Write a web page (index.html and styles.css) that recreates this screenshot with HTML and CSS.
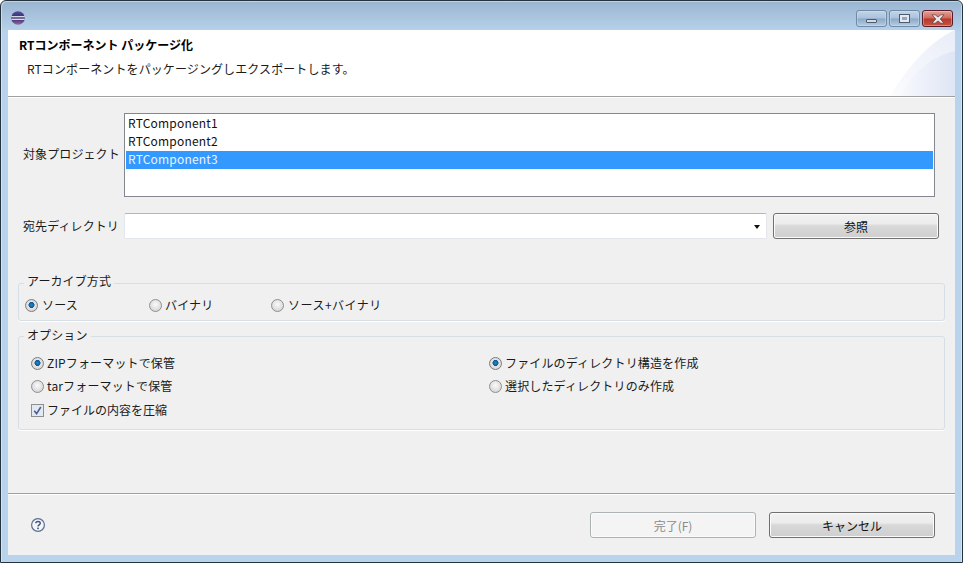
FILE: index.html
```html
<!DOCTYPE html>
<html lang="ja">
<head>
  <meta charset="utf-8">
  <title>RTコンポーネント パッケージ化</title>
  <link rel="stylesheet" href="styles.css">
</head>
<body>
  <div class="window">
    <!-- title bar -->
    <div class="titlebar">
      <svg class="app-icon" viewBox="0 0 16 16">
        <defs>
          <linearGradient id="sphere" x1="0" y1="0" x2="0" y2="1">
            <stop offset="0" stop-color="#5a4f9c"/>
            <stop offset=".5" stop-color="#2c2a6e"/>
            <stop offset="1" stop-color="#9a6a9e"/>
          </linearGradient>
          <linearGradient id="art-light" x1="0" y1="1" x2="1" y2="0">
            <stop offset="0" stop-color="#fbfcfe"/>
            <stop offset="1" stop-color="#e9edf8"/>
          </linearGradient>
          <linearGradient id="art-dark" x1="0" y1="0" x2="1" y2="0">
            <stop offset="0" stop-color="#f8f9fd"/>
            <stop offset="1" stop-color="#dfe5f5"/>
          </linearGradient>
        </defs>
        <circle cx="8" cy="8" r="6.8" fill="url(#sphere)"/>
        <rect x="1.4" y="6.2" width="13.2" height="1.1" fill="#fff"/>
        <rect x="1.4" y="8.7" width="13.2" height="1.1" fill="#fff"/>
      </svg>
      <div class="winbtns">
        <div class="winbtn"><span class="glyph-min"></span></div>
        <div class="winbtn"><span class="glyph-max"></span></div>
        <div class="winbtn winbtn-close">
          <svg viewBox="0 0 14 10"><path d="M1 0.8h3.2L7 3l2.8-2.2H13L9.2 5 13 9.2H9.8L7 7 4.2 9.2H1L4.8 5z" fill="#e8e8ea" stroke="#5b3a40" stroke-width=".7"/></svg>
        </div>
      </div>
    </div>

    <div class="client">
      <!-- banner -->
      <div class="banner">
        <svg class="banner-art" viewBox="0 0 70 66" preserveAspectRatio="none">
          <path d="M5 66C20 42 40 14 70 0V66z" fill="url(#art-light)"/>
          <path d="M15 66C25 45 45 27 70 21V66z" fill="url(#art-dark)"/>
        </svg>
        <div class="banner-title">RTコンポーネント パッケージ化</div>
        <div class="banner-desc">RTコンポーネントをパッケージングしエクスポートします。</div>
      </div>

      <!-- form -->
      <div class="content">
        <div class="row row-list">
          <div class="row-label">対象プロジェクト</div>
          <ul class="listbox">
            <li>RTComponent1</li>
            <li>RTComponent2</li>
            <li class="selected">RTComponent3</li>
          </ul>
        </div>

        <div class="row row-dest">
          <div class="row-label">宛先ディレクトリ</div>
          <div class="combo"><span class="combo-arrow"></span></div>
          <button class="btn btn-browse">参照</button>
        </div>

        <fieldset class="group group-archive">
          <legend>アーカイブ方式</legend>
          <label class="opt"><span class="radio checked"></span>ソース</label>
          <label class="opt"><span class="radio"></span>バイナリ</label>
          <label class="opt opt-wide"><span class="radio"></span>ソース+バイナリ</label>
        </fieldset>

        <fieldset class="group group-options">
          <legend>オプション</legend>
          <div class="opt-col">
            <label class="opt"><span class="radio checked"></span>ZIPフォーマットで保管</label>
            <label class="opt"><span class="radio"></span>tarフォーマットで保管</label>
            <label class="opt opt-check"><span class="check">
              <svg viewBox="0 0 9 9"><path d="M1.2 4.8 3.6 7.6 7.8 1" fill="none" stroke="#4a5f96" stroke-width="1.6"/></svg>
            </span>ファイルの内容を圧縮</label>
          </div>
          <div class="opt-col">
            <label class="opt"><span class="radio checked"></span>ファイルのディレクトリ構造を作成</label>
            <label class="opt"><span class="radio"></span>選択したディレクトリのみ作成</label>
          </div>
        </fieldset>
      </div>

      <!-- footer -->
      <div class="footer">
        <svg class="help" viewBox="0 0 16 16">
          <circle cx="8" cy="8" r="6.4" fill="#f4f6fa" stroke="#5a6f94" stroke-width="1.2"/>
          <path d="M5.8 6.3C5.8 3.9 10.3 3.9 10.3 6.3 10.3 7.9 8 7.9 8 9.6" fill="none" stroke="#3f5378" stroke-width="1.4"/>
          <rect x="7.2" y="10.6" width="1.6" height="1.6" fill="#3f5378"/>
        </svg>
        <button class="btn btn-finish" disabled>完了(F)</button>
        <button class="btn btn-cancel">キャンセル</button>
      </div>
    </div>
  </div>
</body>
</html>
```

FILE: styles.css
```css
html, body {
  margin: 0; padding: 0;
  width: 963px; height: 563px;
  overflow: hidden;
  background: #fff;
  font-family: "Noto Sans CJK JP", "Noto Sans", sans-serif;
  font-size: 12px;
  letter-spacing: .1px;
  color: #1a1a1a;
}
.window {
  width: 963px; height: 563px;
  box-sizing: border-box;
  padding: 0 7px 7px;
  display: flex; flex-direction: column;
  border: 1px solid #26333d;
  border-radius: 6px 6px 0 0;
  background: linear-gradient(#9ab5d1, #b9d3ec 32px);
  box-shadow: inset 1px 1px 0 #ffffff66, inset -1px 0 0 #ffffff66;
}

/* title bar */
.titlebar {
  height: 29px;
  display: flex; align-items: flex-start; justify-content: space-between;
  flex: none;
}
.app-icon {
  width: 16px; height: 16px;
  margin: 9px 0 0 2px;
  display: block;
}
.winbtns {
  display: flex; gap: 2px;
  margin: 9px 2px 0 0;
}
.winbtn {
  width: 29px; height: 15px;
  display: flex; align-items: center; justify-content: center;
  border: 1px solid #6f8aa6;
  border-radius: 3px;
  background: linear-gradient(#c3d5e8 0, #a9c2dc 48%, #8ba8c6 52%, #b6cde4 100%);
  box-shadow: inset 0 0 0 1px #d6e3f066;
}
.winbtn-close {
  border-color: #5b1a25;
  background: linear-gradient(#e0a49a 0, #d0685a 48%, #b5382c 52%, #c9563f 100%);
}
.winbtn-close svg { width: 14px; height: 10px; display: block; }
.glyph-min {
  width: 9px; height: 2px;
  margin-top: 4px;
  background: #d6dbe2;
  border: 1px solid #4d5b6e;
  border-radius: 1px;
}
.glyph-max {
  width: 5px; height: 3px;
  background: #8ea8c4;
  border: 2px solid #e6eaf0;
  outline: 1px solid #4d5b6e;
}

/* client area */
.client {
  flex: 1;
  min-height: 0;
  display: flex; flex-direction: column;
  background: #f0f0f0;
}
.banner {
  position: relative;
  height: 66px;
  flex: none;
  box-sizing: border-box;
  padding: 6px 0 0 11px;
  background: #fff;
}
.banner-art {
  position: absolute;
  right: 0; top: 0;
  width: 70px; height: 66px;
}
.banner-title {
  position: relative;
  font-weight: 700;
  font-size: 12px;
  line-height: 18px;
  letter-spacing: 0;
  color: #000;
}
.banner-desc {
  position: relative;
  margin: 6px 0 0 8px;
  line-height: 18px;
}
.content {
  flex: 1;
  min-height: 0;
  padding: 16px 0 0;
  border-top: 1px solid #a0a0a0;
  box-shadow: inset 0 1px 0 #fff;
  border-bottom: 1px solid #a0a0a0;
}
.row {
  display: flex; align-items: center;
}
.row-label {
  width: 101px;
  margin-left: 15px;
  flex: none;
  white-space: nowrap;
  line-height: 18px;
}
.row-list { padding-right: 20px; }
.row-list .row-label { padding-bottom: 2px; }
.listbox {
  flex: 1;
  height: 84px;
  box-sizing: border-box;
  margin: 0; padding: 1px;
  list-style: none;
  background: #fff;
  border: 1px solid #828790;
}
.listbox li {
  height: 18px;
  line-height: 16px;
  padding-left: 2px;
  letter-spacing: .2px;
  color: #111;
}
.listbox li.selected {
  background: #3399ff;
  color: #eaf4ff;
}
.row-dest {
  margin-top: 16px;
  padding-right: 16px;
  gap: 6px;
}
.row-dest .row-label { margin-right: -6px; }
.combo {
  flex: 1;
  height: 26px;
  box-sizing: border-box;
  position: relative;
  background: #fff;
  border: 1px solid #e3e6ea;
  border-top-color: #b4b6ba;
  border-radius: 2px;
}
.combo-arrow {
  position: absolute;
  right: 6px; top: 11px;
  border-left: 3.5px solid transparent;
  border-right: 3.5px solid transparent;
  border-top: 4px solid #111;
}
.btn {
  height: 26px;
  width: 166px;
  box-sizing: border-box;
  padding: 0;
  font-family: inherit;
  font-size: 12px;
  color: #111;
  border: 1px solid #707070;
  border-radius: 3px;
  background: linear-gradient(#f1f1f1 0, #ececec 40%, #d8d8d8 50%, #cfcfcf 100%);
  box-shadow: inset 0 0 0 1px #fbfbfb;
}
.btn:disabled {
  color: #8a8a8a;
  border-color: #adb2b5;
  background: #f4f4f4;
}

/* groups */
.group {
  margin: 0 10px;
  padding: 0;
  min-width: 0;
  border: 1px solid #d5dfe5;
  border-radius: 3px;
  box-shadow: 0 1px 0 #fff;
}
.group legend {
  padding: 0 3px 4px;
  line-height: 16px;
}
.group-archive {
  margin-top: 34px;
  height: 48px;
  box-sizing: border-box;
  display: flex;
  padding: 3px 0 0 6px;
}
.group-archive legend { margin-left: -1px; }
.group-archive .opt:nth-child(2) { width: 124px; }
.group-archive .opt:nth-child(3) { width: 122px; gap: 3px; }
.group-archive .opt-wide { letter-spacing: .5px; }
.group-options {
  margin-top: 6px;
  height: 103px;
  box-sizing: border-box;
  display: grid;
  grid-template-columns: 458px 1fr;
  padding: 9px 0 0 12px;
}
.group-options legend { margin-left: -7px; padding-bottom: 2px; }
.group-options .opt { gap: 3px; }
.group-options .opt-check { margin-top: 1px; letter-spacing: 0; }
.opt-col { display: flex; flex-direction: column; gap: 5px; }
.opt {
  display: flex; align-items: center;
  gap: 4px;
  height: 18px;
  line-height: 18px;
  letter-spacing: .15px;
  white-space: nowrap;
}
.radio {
  width: 11px; height: 11px;
  flex: none;
  border-radius: 50%;
  border: 1px solid #8f8f8f;
  background: radial-gradient(circle at 50% 40%, #fafafa, #cccccc);
}
.radio.checked {
  background: radial-gradient(circle at 50% 45%, #1d8ac8 0, #0d5a96 34%, #e4e4e4 40%, #cfcfcf 100%);
  border-color: #7c7c7c;
}
.check {
  width: 11px; height: 11px;
  flex: none;
  display: flex; align-items: center; justify-content: center;
  border: 1px solid #8e8f8f;
  background: #e4e8f0;
}
.check svg { width: 9px; height: 9px; display: block; }

/* footer */
.footer {
  height: 61px;
  flex: none;
  box-sizing: border-box;
  padding: 18px 20px 0 22px;
  display: flex; align-items: flex-start;
  box-shadow: inset 0 1px 0 #fff;
}
.help {
  width: 16px; height: 16px;
  margin: 5px auto 0 0;
  display: block;
}
.btn-cancel { margin-left: 13px; }
```
